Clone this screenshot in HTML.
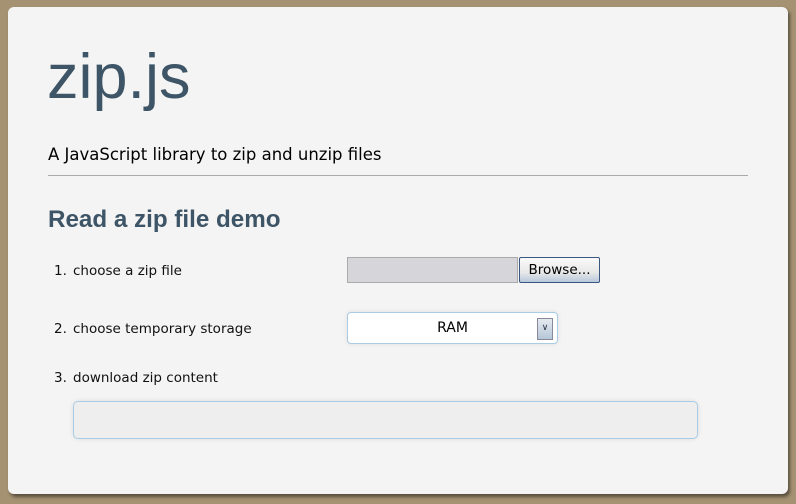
<!DOCTYPE html><html><head><style>
body{margin:0;width:796px;height:504px;background:#a59272;font-family:"DejaVu Sans",sans-serif;position:relative;overflow:hidden}
.card{position:absolute;left:8px;top:7px;width:780px;height:487px;background:#f4f4f4;border-radius:6px;box-shadow:2px 3px 3px #5a5040}
.a{position:absolute;white-space:nowrap}
</style></head><body><div class="card"></div>
<div class="a" style="left:47px;top:41px;font-size:63px;color:#3d5566;font-family:'Liberation Sans',sans-serif">zip.js</div>
<div class="a" style="left:48px;top:145px;font-size:16.5px;color:#000">A JavaScript library to zip and unzip files</div>
<div class="a" style="left:48px;top:175px;width:700px;height:1px;background:#aaa"></div>
<div class="a" style="left:48px;top:206px;font-size:24.2px;font-weight:bold;color:#3d5566;font-family:'Liberation Sans',sans-serif">Read a zip file demo</div>
<div class="a" style="left:54px;top:263px;font-size:13.5px;color:#111">1.</div><div class="a" style="left:73px;top:263px;font-size:13.5px;color:#111">choose a zip file</div>
<div class="a" style="left:54px;top:321px;font-size:13.5px;color:#111">2.</div><div class="a" style="left:73px;top:321px;font-size:13.5px;color:#111">choose temporary storage</div>
<div class="a" style="left:54px;top:370px;font-size:13.5px;color:#111">3.</div><div class="a" style="left:73px;top:370px;font-size:13.5px;color:#111">download zip content</div>
<div class="a" style="left:347px;top:257px;width:169px;height:24px;background:#d6d5da;border:1px solid #aaa"></div>
<div class="a" style="left:519px;top:257px;width:79px;height:24px;border:1px solid #3a5780;border-radius:2px;background:linear-gradient(#fafafa,#e8e8e8 60%,#b8c8dc);font-size:13.5px;text-align:center;line-height:24px">Browse...</div>
<div class="a" style="left:347px;top:312px;width:209px;height:30px;border:1px solid #a8cce6;border-radius:4px;background:#fff;box-shadow:0 0 4px #ddd;font-size:14px;text-align:center;line-height:30px">RAM</div>
<div class="a" style="left:537px;top:318px;width:14px;height:20px;border:1px solid #889;background:linear-gradient(#e6eaf0,#b5c6d8);font-size:9px;text-align:center;line-height:18px;color:#234">&#8744;</div>
<div class="a" style="left:73px;top:401px;width:623px;height:36px;border:1px solid #a8cce6;border-radius:5px;background:#eee;box-shadow:0 0 5px #ddd"></div>
</body></html>
